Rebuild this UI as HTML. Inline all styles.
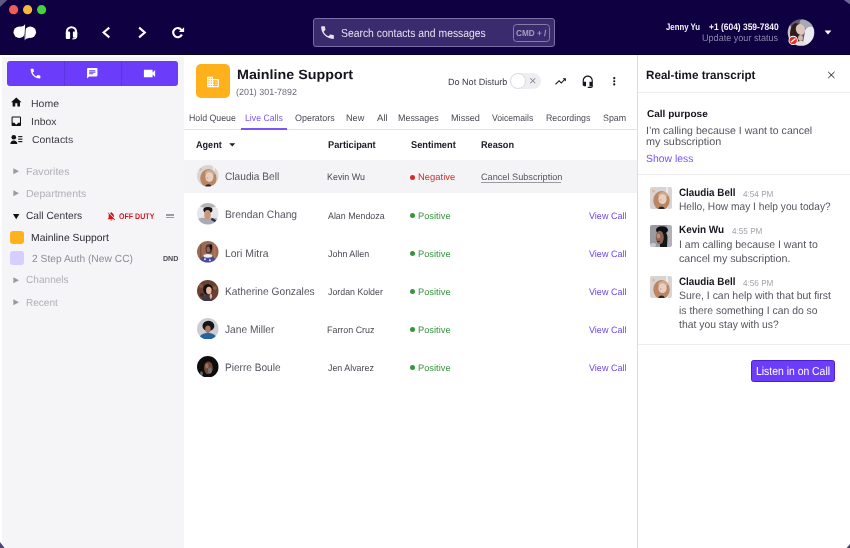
<!DOCTYPE html><html><head><meta charset="utf-8"><style>
html,body{margin:0;padding:0;}
body{width:850px;height:548px;overflow:hidden;position:relative;background:#fff;font-family:"Liberation Sans",sans-serif;}
.t{position:absolute;line-height:1;white-space:nowrap;transform-origin:0 0;text-rendering:geometricPrecision;}
.r{position:absolute;}
</style></head><body><div class="r" style="left:0px;top:0px;width:850px;height:55px;background:#0f0042;"></div>
<div class="r" style="left:0px;top:53.8px;width:850px;height:1.2px;background:#070028;"></div>
<svg class="r" style="left:0;top:0" width="850" height="55"><path d="M0 0 H7.2 L0 6.9 Z" fill="#5d5980"/><path d="M850 0 H843.8 L850 4.6 Z" fill="#6a6690"/><circle cx="13.6" cy="9.7" r="4.6" fill="#ee5d56"/><circle cx="27.6" cy="9.7" r="4.6" fill="#f6b73c"/><circle cx="41.6" cy="9.7" r="4.6" fill="#45d13b"/><g fill="#fff"><circle cx="19.3" cy="32.3" r="5.75"/><path d="M20.5 26.7 Q23.8 26.6 25.3 23.9 L24.9 33 L19.3 33 Z"/><circle cx="30.3" cy="32.3" r="5.75"/><path d="M29.1 37.9 Q25.8 38.0 24.1 40.7 L24.5 31.6 L30.3 31.6 Z"/></g><path d="M25.75 23.5 L24.55 41" stroke="#0f0042" stroke-width="0.75"/><path d="M66.9 33.5 V31.8 A4.6 4.6 0 0 1 76.1 31.8 V33.5" fill="none" stroke="#fff" stroke-width="2.1"/><rect x="65.8" y="31.6" width="4.3" height="7.4" rx="1.1" fill="#fff"/><rect x="72.9" y="31.6" width="4.4" height="6.2" rx="1.1" fill="#fff"/><path d="M76.3 37.0 Q76.2 38.9 72.4 38.9" fill="none" stroke="#fff" stroke-width="1.3"/><path d="M109.3 27.6 L103.6 32.5 L109.3 37.4" fill="none" stroke="#fff" stroke-width="2.1"/><path d="M139.1 27.6 L144.8 32.5 L139.1 37.4" fill="none" stroke="#fff" stroke-width="2.1"/><path d="M181.6 30.2 A4.55 4.55 0 1 0 181.9 34.5" fill="none" stroke="#fff" stroke-width="2.1"/><path d="M184.1 27.2 L184.1 32.0 L178.8 32.0 Z" fill="#fff"/></svg>
<div class="r" style="left:313px;top:18.2px;width:241.6px;height:28.6px;background:#3a2a6e;border:1.2px solid #7a6ea6;border-radius:3px;box-sizing:border-box"></div>
<svg class="r" style="left:318.8px;top:23.6px;" width="17" height="17" viewBox="0 0 24 24"><path d="M6.62 10.79c1.44 2.83 3.76 5.14 6.59 6.59l2.2-2.2c.27-.27.67-.36 1.02-.24 1.12.37 2.33.57 3.57.57.55 0 1 .45 1 1V20c0 .55-.45 1-1 1-9.39 0-17-7.61-17-17 0-.55.45-1 1-1h3.5c.55 0 1 .45 1 1 0 1.25.2 2.45.57 3.57.11.35.03.74-.25 1.02l-2.2 2.2z" fill="#e6e2f0"/></svg>
<div class="t" style="top:28px;left:341.03px;font-size:11.63px;font-weight:normal;color:#e4e0f0;transform:scaleX(0.8928);">Search contacts and messages</div>
<div class="r" style="left:512.5px;top:24.1px;width:37.3px;height:17.5px;background:transparent;border:1.5px solid #857ca6;border-radius:3.5px;box-sizing:border-box"></div>
<div class="t" style="top:29px;left:516.16px;font-size:8.72px;font-weight:bold;color:#a49ebe;transform:scaleX(0.9377);">CMD + /</div>
<div class="t" style="top:23px;left:666.28px;font-size:9.45px;font-weight:bold;color:#f4f2fa;transform:scaleX(0.8245);">Jenny Yu</div>
<div class="t" style="top:23px;left:708.65px;font-size:9.45px;font-weight:bold;color:#f4f2fa;transform:scaleX(0.8936);">+1 (604) 359-7840</div>
<div class="t" style="top:34px;left:702.10px;font-size:9.59px;font-weight:normal;color:#8d86ab;transform:scaleX(0.9467);">Update your status</div>
<svg class="r" style="left:786px;top:18px" width="32" height="32" viewBox="0 0 32 32"><defs><clipPath id="cav"><circle cx="15" cy="14.5" r="13.3"/></clipPath><filter id="bl"><feGaussianBlur stdDeviation="0.6"/></filter></defs><g clip-path="url(#cav)"><g filter="url(#bl)"><rect width="32" height="32" fill="#5e5a70"/><ellipse cx="3" cy="15" rx="2.6" ry="9" fill="#c4c4cc"/><ellipse cx="21" cy="5" rx="7.5" ry="5.5" fill="#a8a8b2"/><ellipse cx="10" cy="16" rx="6" ry="11" fill="#2e1e1a"/><ellipse cx="14.5" cy="11.5" rx="4.6" ry="5.6" fill="#dcc4bc" transform="rotate(-20 14.5 11.5)"/><path d="M16 30 L19.5 11 Q25 6 29.5 11 L30 30 Z" fill="#ececf0"/><ellipse cx="15" cy="27.5" rx="6" ry="4.5" fill="#e4dede"/><ellipse cx="14.5" cy="20" rx="2.4" ry="3" fill="#d8b8a8"/></g></g><circle cx="7.2" cy="22.4" r="4.7" fill="#fff"/><circle cx="7.2" cy="22.4" r="3.7" fill="#e0302a"/><path d="M4.9 24.2 L9.5 20.6" stroke="#fff" stroke-width="1.3"/></svg>
<svg class="r" style="left:824px;top:29.8px" width="8" height="5"><path d="M0.6 0.6 L7.4 0.6 L4 4.6 Z" fill="#fff"/></svg>
<div class="r" style="left:2px;top:57px;width:181.6px;height:491px;background:#f5f5f8;"></div>
<div class="r" style="left:0px;top:55px;width:2px;height:493px;background:#ffffff;"></div>
<div class="r" style="left:0px;top:55px;width:850px;height:2px;background:#ffffff;"></div>
<div class="r" style="left:7px;top:61px;width:171px;height:25px;background:#6b3dfa;border-radius:3px"></div>
<div class="r" style="left:64px;top:61px;width:1px;height:25px;background:#5a36e0;"></div>
<div class="r" style="left:121px;top:61px;width:1px;height:25px;background:#5a36e0;"></div>
<svg class="r" style="left:28.8px;top:67.0px;" width="13" height="13" viewBox="0 0 24 24"><path d="M6.62 10.79c1.44 2.83 3.76 5.14 6.59 6.59l2.2-2.2c.27-.27.67-.36 1.02-.24 1.12.37 2.33.57 3.57.57.55 0 1 .45 1 1V20c0 .55-.45 1-1 1-9.39 0-17-7.61-17-17 0-.55.45-1 1-1h3.5c.55 0 1 .45 1 1 0 1.25.2 2.45.57 3.57.11.35.03.74-.25 1.02l-2.2 2.2z" fill="#fff"/></svg>
<svg class="r" style="left:86.3px;top:66.8px;" width="12.5" height="12.5" viewBox="0 0 24 24"><path d="M20 2H4c-1.1 0-1.99.9-1.99 2L2 22l4-4h14c1.1 0 2-.9 2-2V4c0-1.1-.9-2-2-2zM6 9h12v2H6V9zm8 5H6v-2h8v2zm4-6H6V6h12v2z" fill="#fff"/></svg>
<svg class="r" style="left:141.8px;top:66.0px;" width="15" height="15" viewBox="0 0 24 24"><path d="M17 10.5V7c0-.55-.45-1-1-1H4c-.55 0-1 .45-1 1v10c0 .55.45 1 1 1h12c.55 0 1-.45 1-1v-3.5l4 4v-11l-4 4z" fill="#fff"/></svg>
<svg class="r" style="left:10.4px;top:96.2px;" width="12.6" height="12.6" viewBox="0 0 24 24"><path d="M10 20v-6h4v6h5v-8h3L12 3 2 12h3v8z" fill="#111"/></svg>
<svg class="r" style="left:10.2px;top:115.2px;" width="12.6" height="12.6" viewBox="0 0 24 24"><path d="M19 3H4.99c-1.11 0-1.98.89-1.98 2L3 19c0 1.1.88 2 1.99 2H19c1.1 0 2-.9 2-2V5c0-1.11-.9-2-2-2zm0 12h-4c0 1.66-1.35 3-3 3s-3-1.34-3-3H4.99V5H19v10z" fill="#111"/></svg>
<svg class="r" style="left:10px;top:134px" width="13" height="11" viewBox="0 0 13 11"><circle cx="3.8" cy="3.2" r="2.3" fill="#111"/><path d="M0.4 10 Q0.5 6.4 3.8 6.4 Q7.1 6.4 7.3 10 Z" fill="#111"/><rect x="8.2" y="2.1" width="4.2" height="1.1" fill="#111"/><rect x="8.2" y="4.6" width="4.2" height="1.1" fill="#111"/><rect x="8.2" y="7.1" width="4.2" height="1.1" fill="#111"/></svg>
<div class="t" style="top:100px;left:31.44px;font-size:10.03px;font-weight:normal;color:#3c3c46;transform:scaleX(1.0477);">Home</div>
<div class="t" style="top:118px;left:31.34px;font-size:10.03px;font-weight:normal;color:#3c3c46;transform:scaleX(1.0425);">Inbox</div>
<div class="t" style="top:136px;left:31.77px;font-size:10.03px;font-weight:normal;color:#3c3c46;transform:scaleX(1.0438);">Contacts</div>
<svg class="r" style="left:13.2px;top:168.4px" width="8" height="8"><path d="M0.3 0.3 L6.0 3.3 L0.3 6.3 Z" fill="#9a9aa2"/></svg>
<div class="t" style="top:168px;left:25.83px;font-size:10.32px;font-weight:normal;color:#b0b0b8;transform:scaleX(1.0262);">Favorites</div>
<svg class="r" style="left:13.2px;top:190.4px" width="8" height="8"><path d="M0.3 0.3 L6.0 3.3 L0.3 6.3 Z" fill="#9a9aa2"/></svg>
<div class="t" style="top:190px;left:25.84px;font-size:10.32px;font-weight:normal;color:#b0b0b8;transform:scaleX(1.0198);">Departments</div>
<svg class="r" style="left:13.2px;top:213.5px" width="8" height="8"><path d="M0 0 L6.4 0 L3.2 5.3 Z" fill="#111"/></svg>
<div class="t" style="top:212px;left:26.18px;font-size:10.32px;font-weight:normal;color:#35353f;transform:scaleX(0.9896);">Call Centers</div>
<svg class="r" style="left:106.3px;top:211.0px;" width="10.5" height="10.5" viewBox="0 0 24 24"><path d="M20 18.69L7.84 6.14 5.27 3.49 4 4.76l2.8 2.8v.01c-.52.99-.8 2.16-.8 3.42v5l-2 2v1h13.73l2 2L21 19.72l-1-1.03zM12 22c1.11 0 2-.89 2-2h-4c0 1.11.89 2 2 2zm6-7.32V11c0-3.08-1.64-5.64-4.5-6.32V4c0-.83-.67-1.5-1.5-1.5s-1.5.67-1.5 1.5v.68c-.15.03-.29.08-.42.12-.1.03-.2.07-.3.11h-.01c-.01 0-.01 0-.02.01-.23.09-.46.2-.68.31 0 0-.01 0-.01.01L18 14.68z" fill="#d9161c"/></svg>
<div class="t" style="top:213px;left:119.21px;font-size:8.14px;font-weight:bold;color:#d9161c;transform:scaleX(0.8700);">OFF DUTY</div>
<div class="r" style="left:166px;top:214.3px;width:8.4px;height:1.5px;background:#9a9aa2;"></div>
<div class="r" style="left:166px;top:216.9px;width:8.4px;height:1.5px;background:#9a9aa2;"></div>
<div class="r" style="left:9.5px;top:230.5px;width:14px;height:13.3px;background:#ffb21c;border-radius:3px"></div>
<div class="t" style="top:234px;left:31.15px;font-size:10.32px;font-weight:normal;color:#2a2a34;transform:scaleX(1.0063);">Mainline Support</div>
<div class="r" style="left:9.5px;top:251.3px;width:14px;height:13.7px;background:#d6ceff;border-radius:3px"></div>
<div class="t" style="top:255px;left:31.98px;font-size:10.32px;font-weight:normal;color:#8e8e98;transform:scaleX(0.9957);">2 Step Auth (New CC)</div>
<div class="t" style="top:255px;left:163.23px;font-size:7.41px;font-weight:bold;color:#4a4a56;transform:scaleX(0.9572);">DND</div>
<svg class="r" style="left:13.2px;top:276.6px" width="8" height="8"><path d="M0.3 0.3 L6.0 3.3 L0.3 6.3 Z" fill="#9a9aa2"/></svg>
<div class="t" style="top:276px;left:26.29px;font-size:10.32px;font-weight:normal;color:#b0b0b8;transform:scaleX(0.9788);">Channels</div>
<svg class="r" style="left:13.2px;top:299.0px" width="8" height="8"><path d="M0.3 0.3 L6.0 3.3 L0.3 6.3 Z" fill="#9a9aa2"/></svg>
<div class="t" style="top:299px;left:25.97px;font-size:10.17px;font-weight:normal;color:#b0b0b8;transform:scaleX(0.9895);">Recent</div>
<div class="r" style="left:196.4px;top:64.4px;width:33.6px;height:33.9px;background:#ffb11b;border-radius:5px"></div>
<svg class="r" style="left:206.2px;top:74.8px;" width="14" height="14" viewBox="0 0 24 24"><path d="M12 7V3H2v18h20V7H12zM6 19H4v-2h2v2zm0-4H4v-2h2v2zm0-4H4V9h2v2zm0-4H4V5h2v2zm4 12H8v-2h2v2zm0-4H8v-2h2v2zm0-4H8V9h2v2zm0-4H8V5h2v2zm10 12h-8v-2h2v-2h-2v-2h2v-2h-2V9h8v10zm-2-8h-2v2h2v-2zm0 4h-2v2h2v-2z" fill="#fff"/></svg>
<div class="t" style="top:68px;left:236.54px;font-size:13.37px;font-weight:bold;color:#15151f;transform:scaleX(1.0708);">Mainline Support</div>
<div class="t" style="top:88px;left:236.25px;font-size:9.01px;font-weight:normal;color:#6a6a74;transform:scaleX(0.9899);">(201) 301-7892</div>
<div class="t" style="top:78px;left:448.06px;font-size:9.16px;font-weight:normal;color:#3a3a44;transform:scaleX(0.9879);">Do Not Disturb</div>
<div class="r" style="left:510.1px;top:73.4px;width:31.4px;height:16px;background:#eeeef2;border-radius:8px"></div>
<div class="r" style="left:510.1px;top:73.4px;width:16px;height:16px;background:#fff;border-radius:50%;border:1px solid #dcdce2;box-sizing:border-box"></div>
<svg class="r" style="left:527.8px;top:76.4px;" width="9.5" height="9.5" viewBox="0 0 24 24"><path d="M19 6.41L17.59 5 12 10.59 6.41 5 5 6.41 10.59 12 5 17.59 6.41 19 12 13.41 17.59 19 19 17.59 13.41 12z" fill="#7a7a84"/></svg>
<svg class="r" style="left:553.6px;top:74.6px;" width="13" height="13" viewBox="0 0 24 24"><path d="M16 6l2.29 2.29-4.88 4.88-4-4L2 16.59 3.41 18l6-6 4 4 6.3-6.29L22 12V6z" fill="#15151f"/></svg>
<svg class="r" style="left:580.5px;top:75.0px;" width="13.5" height="13.5" viewBox="0 0 24 24"><path d="M12 1c-4.97 0-9 4.03-9 9v7c0 1.66 1.34 3 3 3h3v-8H5v-2c0-3.87 3.13-7 7-7s7 3.13 7 7v2h-4v8h4v1h-7v2h6c1.66 0 3-1.34 3-3V10c0-4.97-4.03-9-9-9z" fill="#15151f"/></svg>
<svg class="r" style="left:607.65px;top:74.9px;" width="12.5" height="12.5" viewBox="0 0 24 24"><path d="M12 8c1.1 0 2-.9 2-2s-.9-2-2-2-2 .9-2 2 .9 2 2 2zm0 2c-1.1 0-2 .9-2 2s.9 2 2 2 2-.9 2-2-.9-2-2-2zm0 6c-1.1 0-2 .9-2 2s.9 2 2 2 2-.9 2-2-.9-2-2-2z" fill="#15151f"/></svg>
<div class="r" style="left:184px;top:128.6px;width:453px;height:1px;background:#e2e2e6;"></div>
<div class="r" style="left:241px;top:127.5px;width:46px;height:2.1px;background:#7c52ff;"></div>
<div class="t" style="top:114px;left:188.98px;font-size:9.30px;font-weight:normal;color:#4a4a54;transform:scaleX(0.9449);">Hold Queue</div>
<div class="t" style="top:114px;left:244.88px;font-size:9.30px;font-weight:normal;color:#7c52ff;transform:scaleX(0.9382);">Live Calls</div>
<div class="t" style="top:114px;left:294.78px;font-size:9.30px;font-weight:normal;color:#4a4a54;transform:scaleX(0.9610);">Operators</div>
<div class="t" style="top:114px;left:345.95px;font-size:9.30px;font-weight:normal;color:#4a4a54;transform:scaleX(0.9794);">New</div>
<div class="t" style="top:114px;left:376.78px;font-size:9.30px;font-weight:normal;color:#4a4a54;transform:scaleX(1.0312);">All</div>
<div class="t" style="top:114px;left:398.27px;font-size:9.30px;font-weight:normal;color:#4a4a54;transform:scaleX(0.9589);">Messages</div>
<div class="t" style="top:114px;left:451.05px;font-size:9.30px;font-weight:normal;color:#4a4a54;transform:scaleX(0.9821);">Missed</div>
<div class="t" style="top:114px;left:491.96px;font-size:9.30px;font-weight:normal;color:#4a4a54;transform:scaleX(0.9283);">Voicemails</div>
<div class="t" style="top:114px;left:546.08px;font-size:9.30px;font-weight:normal;color:#4a4a54;transform:scaleX(0.9423);">Recordings</div>
<div class="t" style="top:114px;left:603.20px;font-size:9.30px;font-weight:normal;color:#4a4a54;transform:scaleX(0.9499);">Spam</div>
<div class="t" style="top:141px;left:196.47px;font-size:9.74px;font-weight:bold;color:#1c1c28;transform:scaleX(0.9329);">Agent</div>
<svg class="r" style="left:228.8px;top:143.3px" width="7" height="5"><path d="M0.3 0.3 L6.2 0.3 L3.25 3.6 Z" fill="#1c1c28"/></svg>
<div class="t" style="top:141px;left:327.58px;font-size:9.88px;font-weight:bold;color:#1c1c28;transform:scaleX(0.9345);">Participant</div>
<div class="t" style="top:141px;left:410.63px;font-size:9.88px;font-weight:bold;color:#1c1c28;transform:scaleX(0.9373);">Sentiment</div>
<div class="t" style="top:141px;left:480.59px;font-size:9.88px;font-weight:bold;color:#1c1c28;transform:scaleX(0.9265);">Reason</div>
<svg width="0" height="0" style="position:absolute"><defs><filter id="blur" x="-10%" y="-10%" width="120%" height="120%"><feGaussianBlur stdDeviation="0.55"/></filter></defs></svg>
<div class="r" style="left:184px;top:159.5px;width:453px;height:33.5px;background:#f4f4f7;"></div>
<svg class="r" style="left:196.9px;top:165.3px" width="21.8" height="21.8" viewBox="0 0 22 22"><defs><clipPath id="c77"><circle cx="10.9" cy="10.9" r="10.9"/></clipPath></defs><g clip-path="url(#c77)"><g filter="url(#blur)"><rect width="22" height="22" fill="#d8d4d4"/><rect x="16" y="0" width="2" height="22" fill="#ececee"/><circle cx="3.5" cy="4" r="1.6" fill="#e0b8a0"/><ellipse cx="11.5" cy="13.5" rx="8.2" ry="9.5" fill="#bb8662"/><ellipse cx="13" cy="8" rx="5" ry="3" fill="#d2aa8a"/><ellipse cx="12.5" cy="12.2" rx="4.1" ry="4.9" fill="#e8d0c0"/><circle cx="10.6" cy="13" r="0.9" fill="#e8a0a0"/><ellipse cx="11.5" cy="22" rx="3" ry="2.5" fill="#262630"/></g></g></svg>
<div class="t" style="top:172px;left:224.98px;font-size:10.76px;font-weight:normal;color:#55555f;transform:scaleX(0.9442);">Claudia Bell</div>
<div class="t" style="top:173px;left:327.47px;font-size:9.30px;font-weight:normal;color:#4a4a54;transform:scaleX(0.9577);">Kevin Wu</div>
<div class="r" style="left:410.4px;top:174.6px;width:5px;height:5px;background:#d42a2a;border-radius:50%"></div>
<div class="t" style="top:173px;left:418.03px;font-size:9.30px;font-weight:normal;color:#d42a2a;transform:scaleX(1.0130);">Negative</div>
<div class="t" style="top:173px;left:480.53px;font-size:9.30px;font-weight:normal;color:#55555f;transform:scaleX(0.9846);">Cancel Subscription</div>
<div class="r" style="left:481px;top:181.5px;width:80.4px;height:1.1px;background:#9a9aa2;"></div>
<svg class="r" style="left:196.9px;top:203.38px" width="21.8" height="21.8" viewBox="0 0 22 22"><defs><clipPath id="c84"><circle cx="10.9" cy="10.9" r="10.9"/></clipPath></defs><g clip-path="url(#c84)"><g filter="url(#blur)"><rect width="22" height="22" fill="#e6e6ea"/><ellipse cx="11" cy="2" rx="9" ry="3" fill="#b4b4ba"/><path d="M0 22 V16.5 Q5 13.5 11 16 Q17 13.5 22 16.5 V22 Z" fill="#aaaab4"/><path d="M15 15 L20 18 L19 20 L14 17 Z" fill="#2a2a40"/><ellipse cx="11" cy="7" rx="4.6" ry="2.9" fill="#141418"/><ellipse cx="10.6" cy="11.8" rx="3.3" ry="4.8" fill="#c8987a"/></g></g></svg>
<div class="t" style="top:210px;left:224.66px;font-size:10.76px;font-weight:normal;color:#55555f;transform:scaleX(0.9570);">Brendan Chang</div>
<div class="t" style="top:212px;left:328.18px;font-size:9.30px;font-weight:normal;color:#4a4a54;transform:scaleX(0.9520);">Alan Mendoza</div>
<div class="r" style="left:410.4px;top:212.68px;width:5px;height:5px;background:#36963f;border-radius:50%"></div>
<div class="t" style="top:212px;left:418.04px;font-size:9.30px;font-weight:normal;color:#36963f;transform:scaleX(1.0001);">Positive</div>
<div class="t" style="top:212px;left:588.96px;font-size:9.30px;font-weight:normal;color:#6a45f5;transform:scaleX(0.9709);">View Call</div>
<svg class="r" style="left:196.9px;top:241.46px" width="21.8" height="21.8" viewBox="0 0 22 22"><defs><clipPath id="c90"><circle cx="10.9" cy="10.9" r="10.9"/></clipPath></defs><g clip-path="url(#c90)"><g filter="url(#blur)"><rect width="22" height="22" fill="#9c6a52"/><rect x="3" y="0" width="1.5" height="22" fill="#805444"/><rect x="17" y="0" width="1.5" height="22" fill="#b07a60"/><ellipse cx="12" cy="8" rx="3.4" ry="4.6" fill="#4e3228"/><ellipse cx="14" cy="6" rx="1.4" ry="3" fill="#101010"/><ellipse cx="11.4" cy="8.6" rx="1.8" ry="2.8" fill="#8a6a62"/><ellipse cx="11" cy="20.5" rx="8" ry="6" fill="#4a4c96"/><ellipse cx="11" cy="15" rx="4.5" ry="2" fill="#eeeef4"/><circle cx="8" cy="18.5" r="1" fill="#e0e0f0"/><circle cx="13" cy="19.5" r="1" fill="#e0e0f0"/></g></g></svg>
<div class="t" style="top:249px;left:224.64px;font-size:10.76px;font-weight:normal;color:#55555f;transform:scaleX(0.9695);">Lori Mitra</div>
<div class="t" style="top:250px;left:328.06px;font-size:9.30px;font-weight:normal;color:#4a4a54;transform:scaleX(0.9604);">John Allen</div>
<div class="r" style="left:410.4px;top:250.76px;width:5px;height:5px;background:#36963f;border-radius:50%"></div>
<div class="t" style="top:250px;left:418.04px;font-size:9.30px;font-weight:normal;color:#36963f;transform:scaleX(1.0001);">Positive</div>
<div class="t" style="top:250px;left:588.96px;font-size:9.30px;font-weight:normal;color:#6a45f5;transform:scaleX(0.9709);">View Call</div>
<svg class="r" style="left:196.9px;top:279.54px" width="21.8" height="21.8" viewBox="0 0 22 22"><defs><clipPath id="c96"><circle cx="10.9" cy="10.9" r="10.9"/></clipPath></defs><g clip-path="url(#c96)"><g filter="url(#blur)"><rect width="22" height="22" fill="#6a4030"/><circle cx="4" cy="6" r="2" fill="#8a5a44"/><circle cx="18" cy="8" r="2" fill="#8a5a44"/><circle cx="5" cy="15" r="2" fill="#3e2620"/><ellipse cx="10.5" cy="19.5" rx="5.5" ry="4" fill="#3a3a48"/><ellipse cx="11" cy="9.5" rx="4.8" ry="5.5" fill="#141010"/><ellipse cx="12" cy="10.5" rx="2.8" ry="3.8" fill="#e6b8a6"/><ellipse cx="14" cy="16.5" rx="1.2" ry="3" fill="#e8a8a0"/></g></g></svg>
<div class="t" style="top:287px;left:224.66px;font-size:10.76px;font-weight:normal;color:#55555f;transform:scaleX(0.9496);">Katherine Gonzales</div>
<div class="t" style="top:288px;left:328.06px;font-size:9.30px;font-weight:normal;color:#4a4a54;transform:scaleX(0.9476);">Jordan Kolder</div>
<div class="r" style="left:410.4px;top:288.84px;width:5px;height:5px;background:#36963f;border-radius:50%"></div>
<div class="t" style="top:288px;left:418.04px;font-size:9.30px;font-weight:normal;color:#36963f;transform:scaleX(1.0001);">Positive</div>
<div class="t" style="top:288px;left:588.96px;font-size:9.30px;font-weight:normal;color:#6a45f5;transform:scaleX(0.9709);">View Call</div>
<svg class="r" style="left:196.9px;top:317.62px" width="21.8" height="21.8" viewBox="0 0 22 22"><defs><clipPath id="c102"><circle cx="10.9" cy="10.9" r="10.9"/></clipPath></defs><g clip-path="url(#c102)"><g filter="url(#blur)"><rect width="22" height="22" fill="#cdcdd1"/><ellipse cx="11.5" cy="8" rx="6" ry="5.2" fill="#121214"/><rect x="9.8" y="13" width="2.6" height="3" fill="#a87460"/><ellipse cx="11" cy="11.2" rx="2.8" ry="3.6" fill="#a87460"/><ellipse cx="11" cy="20.2" rx="8.5" ry="5" fill="#2464a2"/></g></g></svg>
<div class="t" style="top:325px;left:225.34px;font-size:10.76px;font-weight:normal;color:#55555f;transform:scaleX(0.9486);">Jane Miller</div>
<div class="t" style="top:326px;left:327.47px;font-size:9.30px;font-weight:normal;color:#4a4a54;transform:scaleX(0.9567);">Farron Cruz</div>
<div class="r" style="left:410.4px;top:326.92px;width:5px;height:5px;background:#36963f;border-radius:50%"></div>
<div class="t" style="top:326px;left:418.04px;font-size:9.30px;font-weight:normal;color:#36963f;transform:scaleX(1.0001);">Positive</div>
<div class="t" style="top:326px;left:588.96px;font-size:9.30px;font-weight:normal;color:#6a45f5;transform:scaleX(0.9709);">View Call</div>
<svg class="r" style="left:196.9px;top:355.7px" width="21.8" height="21.8" viewBox="0 0 22 22"><defs><clipPath id="c108"><circle cx="10.9" cy="10.9" r="10.9"/></clipPath></defs><g clip-path="url(#c108)"><g filter="url(#blur)"><rect width="22" height="22" fill="#0c0c0c"/><ellipse cx="11.5" cy="12" rx="4.5" ry="6.5" fill="#6e4636"/><ellipse cx="10" cy="10" rx="1.8" ry="2.5" fill="#a07060"/><ellipse cx="13" cy="14.5" rx="2" ry="3" fill="#7a7070"/><ellipse cx="4.5" cy="18" rx="1.5" ry="2.5" fill="#606068"/></g></g></svg>
<div class="t" style="top:363px;left:224.67px;font-size:10.76px;font-weight:normal;color:#55555f;transform:scaleX(0.9390);">Pierre Boule</div>
<div class="t" style="top:364px;left:328.06px;font-size:9.30px;font-weight:normal;color:#4a4a54;transform:scaleX(0.9543);">Jen Alvarez</div>
<div class="r" style="left:410.4px;top:365.0px;width:5px;height:5px;background:#36963f;border-radius:50%"></div>
<div class="t" style="top:364px;left:418.04px;font-size:9.30px;font-weight:normal;color:#36963f;transform:scaleX(1.0001);">Positive</div>
<div class="t" style="top:364px;left:588.96px;font-size:9.30px;font-weight:normal;color:#6a45f5;transform:scaleX(0.9709);">View Call</div>
<div class="r" style="left:637px;top:55px;width:1px;height:493px;background:#dcdce0;"></div>
<div class="t" style="top:70px;left:646.42px;font-size:11.92px;font-weight:bold;color:#15151f;transform:scaleX(0.9784);">Real-time transcript</div>
<svg class="r" style="left:826px;top:69.5px" width="10" height="10"><path d="M2.2 1.9 L8.5 8.1 M8.5 1.9 L2.2 8.1" stroke="#15151f" stroke-width="0.95"/></svg>
<div class="r" style="left:638px;top:92.2px;width:212px;height:1.2px;background:#ededf1;"></div>
<div class="t" style="top:110px;left:646.79px;font-size:9.88px;font-weight:bold;color:#15151f;transform:scaleX(1.0149);">Call purpose</div>
<div class="t" style="top:127px;left:645.83px;font-size:10.47px;font-weight:normal;color:#55555f;transform:scaleX(1.0089);">I’m calling because I want to cancel</div>
<div class="t" style="top:138px;left:646.08px;font-size:10.47px;font-weight:normal;color:#55555f;transform:scaleX(1.0347);">my subscription</div>
<div class="t" style="top:155px;left:646.33px;font-size:10.47px;font-weight:normal;color:#7c52ff;transform:scaleX(0.9948);">Show less</div>
<div class="r" style="left:638px;top:174.3px;width:212px;height:1.2px;background:#ededf1;"></div>
<svg class="r" style="left:650px;top:187px" width="22" height="22" viewBox="0 0 22 22"><defs><clipPath id="c123"><rect width="22" height="22" rx="2"/></clipPath></defs><g clip-path="url(#c123)"><g filter="url(#blur)"><rect width="22" height="22" fill="#d8d4d4"/><rect x="16" y="0" width="2" height="22" fill="#ececee"/><circle cx="3.5" cy="4" r="1.6" fill="#e0b8a0"/><ellipse cx="11.5" cy="13.5" rx="8.2" ry="9.5" fill="#bb8662"/><ellipse cx="13" cy="8" rx="5" ry="3" fill="#d2aa8a"/><ellipse cx="12.5" cy="12.2" rx="4.1" ry="4.9" fill="#e8d0c0"/><circle cx="10.6" cy="13" r="0.9" fill="#e8a0a0"/><ellipse cx="11.5" cy="22" rx="3" ry="2.5" fill="#262630"/></g></g></svg>
<div class="t" style="top:188px;left:679.10px;font-size:10.61px;font-weight:bold;color:#15151f;transform:scaleX(0.9287);">Claudia Bell</div>
<div class="t" style="top:190px;left:743.31px;font-size:8.72px;font-weight:normal;color:#a4a4ac;transform:scaleX(0.9347);">4:54 PM</div>
<div class="t" style="top:202px;left:678.66px;font-size:10.76px;font-weight:normal;color:#55555f;transform:scaleX(0.9469);">Hello, How may I help you today?</div>
<svg class="r" style="left:650px;top:225px" width="22" height="22" viewBox="0 0 22 22"><defs><clipPath id="c127"><rect width="22" height="22" rx="2"/></clipPath></defs><g clip-path="url(#c127)"><g filter="url(#blur)"><rect width="22" height="22" fill="#9a9aa0"/><rect x="17" y="0" width="5" height="22" fill="#b2b2b6"/><ellipse cx="3" cy="20" rx="3" ry="2" fill="#c8c8cc"/><ellipse cx="12" cy="5" rx="6" ry="3.8" fill="#101012"/><path d="M10 7 Q17 6 17.5 12 L17 22 L10 22 Z" fill="#121214"/><ellipse cx="9.8" cy="12.5" rx="4" ry="6.8" fill="#8a6352"/><ellipse cx="8.5" cy="11" rx="1.8" ry="2.5" fill="#b89080"/><ellipse cx="8.5" cy="16.5" rx="1.5" ry="0.7" fill="#3a2a2a"/></g></g></svg>
<div class="t" style="top:225px;left:678.83px;font-size:10.61px;font-weight:bold;color:#15151f;transform:scaleX(0.9376);">Kevin Wu</div>
<div class="t" style="top:227px;left:731.61px;font-size:8.72px;font-weight:normal;color:#a4a4ac;transform:scaleX(0.9347);">4:55 PM</div>
<div class="t" style="top:240px;left:678.53px;font-size:10.76px;font-weight:normal;color:#55555f;transform:scaleX(0.9804);">I am calling because I want to</div>
<div class="t" style="top:254px;left:679.04px;font-size:10.76px;font-weight:normal;color:#55555f;transform:scaleX(0.9969);">cancel my subscription.</div>
<svg class="r" style="left:650px;top:276.3px" width="22" height="22" viewBox="0 0 22 22"><defs><clipPath id="c132"><rect width="22" height="22" rx="2"/></clipPath></defs><g clip-path="url(#c132)"><g filter="url(#blur)"><rect width="22" height="22" fill="#d8d4d4"/><rect x="16" y="0" width="2" height="22" fill="#ececee"/><circle cx="3.5" cy="4" r="1.6" fill="#e0b8a0"/><ellipse cx="11.5" cy="13.5" rx="8.2" ry="9.5" fill="#bb8662"/><ellipse cx="13" cy="8" rx="5" ry="3" fill="#d2aa8a"/><ellipse cx="12.5" cy="12.2" rx="4.1" ry="4.9" fill="#e8d0c0"/><circle cx="10.6" cy="13" r="0.9" fill="#e8a0a0"/><ellipse cx="11.5" cy="22" rx="3" ry="2.5" fill="#262630"/></g></g></svg>
<div class="t" style="top:277px;left:679.10px;font-size:10.61px;font-weight:bold;color:#15151f;transform:scaleX(0.9287);">Claudia Bell</div>
<div class="t" style="top:279px;left:743.31px;font-size:8.72px;font-weight:normal;color:#a4a4ac;transform:scaleX(0.9347);">4:56 PM</div>
<div class="t" style="top:291px;left:679.03px;font-size:10.76px;font-weight:normal;color:#55555f;transform:scaleX(0.9707);">Sure, I can help with that but first</div>
<div class="t" style="top:306px;left:678.80px;font-size:10.76px;font-weight:normal;color:#55555f;transform:scaleX(0.9661);">is there something I can do so</div>
<div class="t" style="top:320px;left:679.34px;font-size:10.76px;font-weight:normal;color:#55555f;transform:scaleX(0.9653);">that you stay with us?</div>
<div class="r" style="left:638px;top:344px;width:212px;height:1.2px;background:#ededf1;"></div>
<div class="r" style="left:750.6px;top:360.3px;width:84px;height:22px;background:#6b3dfa;border-radius:2.5px;border:1px solid #4a20d0;box-sizing:border-box"></div>
<div class="t" style="top:366px;left:755.65px;font-size:11.63px;font-weight:normal;color:#ffffff;transform:scaleX(0.8950);">Listen in on Call</div>
<svg class="r" style="left:0;top:0" width="850" height="548"><path d="M0 542 L4.6 548 H0 Z" fill="#4a4570"/><path d="M850 544 L846.6 548 H850 Z" fill="#4a4570"/></svg></body></html>
